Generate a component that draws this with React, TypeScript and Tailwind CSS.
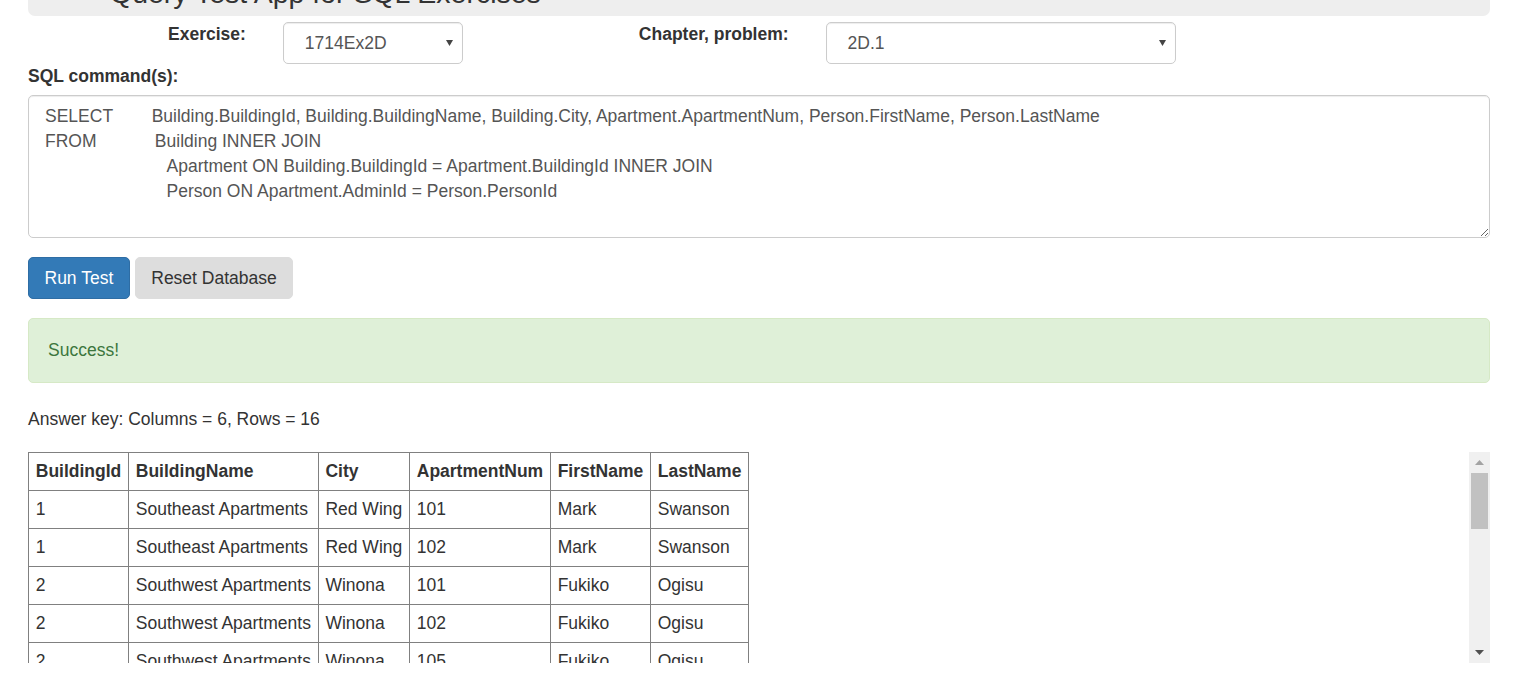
import React from 'react';

const sql =
  'SELECT        Building.BuildingId, Building.BuildingName, Building.City, Apartment.ApartmentNum, Person.FirstName, Person.LastName\n' +
  'FROM            Building INNER JOIN\n' +
  '                         Apartment ON Building.BuildingId = Apartment.BuildingId INNER JOIN\n' +
  '                         Person ON Apartment.AdminId = Person.PersonId';

const columns = ['BuildingId', 'BuildingName', 'City', 'ApartmentNum', 'FirstName', 'LastName'];

const rows = [
  ['1', 'Southeast Apartments', 'Red Wing', '101', 'Mark', 'Swanson'],
  ['1', 'Southeast Apartments', 'Red Wing', '102', 'Mark', 'Swanson'],
  ['2', 'Southwest Apartments', 'Winona', '101', 'Fukiko', 'Ogisu'],
  ['2', 'Southwest Apartments', 'Winona', '102', 'Fukiko', 'Ogisu'],
  ['2', 'Southwest Apartments', 'Winona', '105', 'Fukiko', 'Ogisu'],
  ['2', 'Southwest Apartments', 'Winona', '106', 'Fukiko', 'Ogisu'],
];

function Arrow() {
  return (
    <svg width="7" height="6" viewBox="0 0 7 6">
      <polygon points="0,0 7,0 3.5,6" fill="#444" />
    </svg>
  );
}

function FakeSelect({ value, width }: { value: string; width: string }) {
  return (
    <div
      className={`flex h-[42px] items-center justify-between rounded-[5px] border border-[#ccc] bg-white pl-[21px] pr-[9px] text-[#555] shadow-[inset_0_1px_1px_rgba(0,0,0,0.075)] ${width}`}
    >
      <span>{value}</span>
      <Arrow />
    </div>
  );
}

export default function App() {
  return (
    <div className="h-[686px] w-[1530px] overflow-hidden bg-white font-['Liberation_Sans',Arial,sans-serif] text-[17.5px] leading-[25px] text-[#333]">
      <div className="ml-[28px] w-[1462px]">
        {/* page title, scrolled mostly out of view */}
        <div className="-mt-[44px] flex h-[60px] items-end rounded-[7px] bg-[#eee] pb-[9px] pl-[82px]">
          <h1 className="text-[28.5px] font-normal leading-none">Query Test App for SQL Exercises</h1>
        </div>

        <div className="mt-[6px] flex items-start">
          <label className="ml-[140px] font-bold">Exercise:</label>
          <div className="ml-[37px]">
            <FakeSelect value="1714Ex2D" width="w-[180px]" />
          </div>
          <label className="ml-[176px] font-bold">Chapter, problem:</label>
          <div className="ml-[37px]">
            <FakeSelect value="2D.1" width="w-[350px]" />
          </div>
        </div>

        <div className="font-bold">SQL command(s):</div>
        <textarea
          readOnly
          defaultValue={sql}
          className="mt-[6px] block h-[143px] w-full rounded-[5px] border border-[#ccc] px-[16px] py-[7.5px] font-['Liberation_Sans',Arial,sans-serif] text-[17.5px] leading-[25px] text-[#555] shadow-[inset_0_1px_1px_rgba(0,0,0,0.075)] outline-none"
        />

        <div className="mt-[19px] flex gap-[5px]">
          <button className="h-[42px] rounded-[5px] border border-[#2e6da4] bg-[#337ab7] px-[15.5px] text-white">
            Run Test
          </button>
          <button className="h-[42px] rounded-[5px] border border-[#ddd] bg-[#ddd] px-[15.5px] text-[#333]">
            Reset Database
          </button>
        </div>

        <div className="mt-[19px] rounded-[5px] border border-[#d6e9c6] bg-[#dff0d8] px-[19px] py-[18.75px] text-[#3c763d]">
          Success!
        </div>

        <div className="mt-[24px]">Answer key: Columns = 6, Rows = 16</div>

        <div className="mt-[20px] flex h-[211px]">
          <div className="flex-1 overflow-hidden">
            <table className="border-collapse border border-[#808080]">
              <thead>
                <tr>
                  {columns.map((c) => (
                    <th key={c} className="border border-[#808080] px-[6.75px] py-[6px] text-left font-bold">
                      {c}
                    </th>
                  ))}
                </tr>
              </thead>
              <tbody>
                {rows.map((r, i) => (
                  <tr key={i}>
                    {r.map((cell, j) => (
                      <td key={j} className="border border-[#808080] px-[6.75px] py-[6px]">
                        {cell}
                      </td>
                    ))}
                  </tr>
                ))}
              </tbody>
            </table>
          </div>
          <div className="flex w-[21px] flex-col bg-[#f0f0f0]">
            <div className="flex h-[21px] items-center justify-center">
              <svg width="9" height="5" viewBox="0 0 9 5">
                <polygon points="0,5 9,5 4.5,0" fill="#a3a3a3" />
              </svg>
            </div>
            <div className="mx-[2px] h-[56px] bg-[#c1c1c1]" />
            <div className="flex-1" />
            <div className="flex h-[21px] items-center justify-center">
              <svg width="9" height="5" viewBox="0 0 9 5">
                <polygon points="0,0 9,0 4.5,5" fill="#505050" />
              </svg>
            </div>
          </div>
        </div>
      </div>
    </div>
  );
}
